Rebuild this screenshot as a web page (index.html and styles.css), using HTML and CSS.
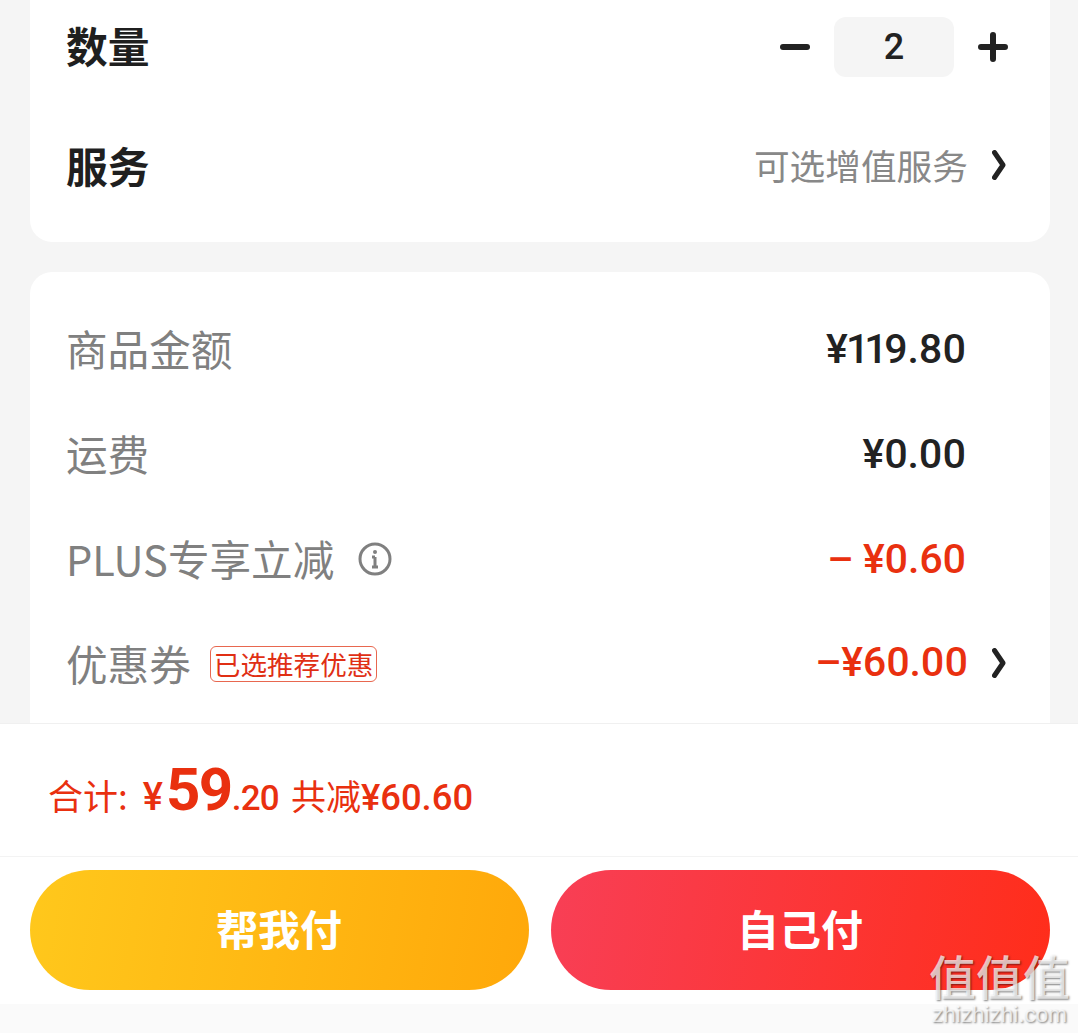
FILE: index.html
```html
<!DOCTYPE html>
<html lang="zh-CN">
<head>
<meta charset="utf-8">
<title>确认订单</title>
<link rel="stylesheet" href="styles.css">
</head>
<body>
<div class="page">
  <main class="scroll">
    <section class="card card-top">
      <div class="row row-qty">
        <span class="title">数量</span>
        <div class="stepper">
          <svg class="step-icon" viewBox="0 0 30 30"><path d="M3 15h24"/></svg>
          <span class="qty">2</span>
          <svg class="step-icon" viewBox="0 0 30 30"><path d="M3 15h24M15 3v24"/></svg>
        </div>
      </div>
      <div class="row row-service">
        <span class="title">服务</span>
        <div class="row-end">
          <span class="hint">可选增值服务</span>
          <svg class="chevron" viewBox="0 0 14 30"><path d="M2.5 2.5 11 15 2.5 27.5"/></svg>
        </div>
      </div>
    </section>
    <section class="card card-price">
      <div class="price-row">
        <span class="label">商品金额</span>
        <span class="amount">¥119.80</span>
      </div>
      <div class="price-row">
        <span class="label">运费</span>
        <span class="amount">¥0.00</span>
      </div>
      <div class="price-row">
        <div class="label-group">
          <span class="label">PLUS专享立减</span>
          <svg class="info" viewBox="0 0 34 34">
            <circle cx="17" cy="17" r="15"/>
            <path d="M17 15v10M14 15h3M14 25h6"/>
            <circle class="info-dot" cx="17" cy="10" r="2"/>
          </svg>
        </div>
        <span class="amount amount-off">– ¥0.60</span>
      </div>
      <div class="price-row price-row-link">
        <div class="label-group">
          <span class="label">优惠券</span>
          <span class="tag">已选推荐优惠</span>
        </div>
        <div class="row-end row-end-tight">
          <span class="amount amount-off">–¥60.00</span>
          <svg class="chevron" viewBox="0 0 14 30"><path d="M2.5 2.5 11 15 2.5 27.5"/></svg>
        </div>
      </div>
    </section>
  </main>
  <footer class="footer">
    <div class="summary">
      <span class="sum-label">合计:</span>
      <span class="sum-yen">¥</span><span class="sum-int">59</span><span class="sum-dec">.20</span>
      <span class="sum-off">共减<span class="sum-off-num">¥60.60</span></span>
    </div>
    <div class="actions">
      <button class="pay pay-friend">帮我付</button>
      <button class="pay pay-self">自己付</button>
    </div>
  </footer>
  <div class="foot-strip"></div>
  <div class="mark">
    <span class="mark-glyph">值值值</span>
    <span class="mark-url">zhizhizhi.com</span>
  </div>
</div>
</body>
</html>
```

FILE: styles.css
```css
* { box-sizing: border-box; }

html, body {
  margin: 0;
  padding: 0;
  background: #f5f5f5;
}

body {
  font-family: "Noto Sans CJK SC", "Noto Sans", sans-serif;
  color: #222;
}

.page {
  position: relative;
  width: 1078px;
  height: 1033px;
  overflow: hidden;
  display: flex;
  flex-direction: column;
}

.scroll {
  height: 723px;
  flex: none;
  overflow: hidden;
  padding: 0 28px 0 30px;
  display: flex;
  flex-direction: column;
  gap: 30px;
}

.card {
  background: #fff;
  flex: none;
}

.card-top {
  height: 242px;
  border-radius: 0 0 22px 22px;
  padding: 0 42px 28px 36px;
  display: flex;
  flex-direction: column;
  gap: 26px;
}

.row {
  height: 94px;
  display: flex;
  align-items: center;
  justify-content: space-between;
}

.title {
  font-size: 41.8px;
  font-weight: 700;
  line-height: 1;
  color: #1f1f1f;
  margin-bottom: 3px;
}

.stepper {
  display: flex;
  align-items: center;
  gap: 24px;
}

.step-icon {
  width: 30px;
  height: 30px;
  fill: none;
  stroke: #222;
  stroke-width: 6;
  stroke-linecap: round;
}

.qty {
  width: 120px;
  height: 60px;
  border-radius: 12px;
  background: #f5f5f5;
  font-family: "Roboto", sans-serif;
  font-size: 36px;
  font-weight: 500;
  display: flex;
  align-items: center;
  justify-content: center;
}

.row-end {
  display: flex;
  align-items: center;
  gap: 24px;
  margin-bottom: 4px;
}

.row-end-tight .chevron {
  margin-bottom: 2px;
}

.hint {
  font-size: 35.7px;
  line-height: 1;
  color: #888;
}

.chevron {
  width: 14px;
  height: 30px;
  margin-right: 2px;
  fill: none;
  stroke: #222;
  stroke-width: 5;
  stroke-linecap: round;
  stroke-linejoin: round;
}

.card-price {
  height: 520px;
  border-radius: 22px 22px 0 0;
  padding: 26px 42px 0 36px;
}

.price-row {
  height: 105px;
  display: flex;
  align-items: center;
  justify-content: space-between;
  padding-right: 42px;
}

.price-row-link {
  padding-right: 0;
}

.label-group {
  display: flex;
  align-items: center;
  gap: 24px;
}

.label {
  font-size: 41.6px;
  line-height: 1;
  color: #808080;
  margin-bottom: 4px;
}

.amount {
  font-family: "Roboto", sans-serif;
  font-feature-settings: "pnum";
  font-size: 41px;
  font-weight: 500;
  letter-spacing: -0.4px;
  line-height: 1;
  color: #222;
  margin-bottom: 2px;
}

.amount-off {
  color: #e9300f;
}

.info {
  width: 34px;
  height: 34px;
  margin-bottom: 3px;
  fill: none;
  stroke: #808080;
  stroke-width: 3;
}

.info-dot {
  fill: #808080;
  stroke: none;
}

.tag {
  margin: 0 0 4px -5px;
  height: 36px;
  padding: 0 3px;
  border: 1px solid #e8674f;
  border-radius: 6px;
  color: #e02f14;
  font-size: 26.6px;
  line-height: 34px;
  white-space: nowrap;
}

.footer {
  height: 281px;
  flex: none;
  background: #fff;
  border-top: 1px solid #f0f0f0;
  display: flex;
  flex-direction: column;
}

.summary {
  height: 132px;
  flex: none;
  padding: 0 0 0 48px;
  display: flex;
  align-items: baseline;
  align-content: center;
  flex-wrap: wrap;
  color: #e9300f;
  font-size: 35px;
  line-height: 1;
  white-space: nowrap;
}

.sum-label {
  margin-right: 15px;
}

.sum-yen {
  font-family: "Roboto", sans-serif;
  font-weight: 500;
  font-size: 38px;
  margin-right: 3px;
}

.sum-int {
  font-family: "Roboto", sans-serif;
  font-weight: 700;
  font-size: 60px;
  letter-spacing: -1.5px;
}

.sum-dec {
  font-family: "Roboto", sans-serif;
  font-size: 35px;
  font-weight: 500;
  letter-spacing: -0.8px;
  margin-right: 12px;
}

.sum-off-num {
  font-family: "Roboto", sans-serif;
  font-size: 36.4px;
  font-weight: 500;
}

.actions {
  border-top: 1px solid #f3f3f3;
  padding: 13px 28px 0 30px;
  display: flex;
  gap: 22px;
}

.pay {
  width: 499px;
  height: 120px;
  border: 0;
  border-radius: 60px;
  color: #fff;
  font-family: inherit;
  font-size: 42px;
  font-weight: 700;
  padding: 0 1px 6px 0;
}

.pay-friend {
  background: linear-gradient(100deg, #ffc81c, #ffa80a);
}

.pay-self {
  background: linear-gradient(100deg, #f83f56, #ff2d1a);
}

.foot-strip {
  flex: 1;
  background: #fafafa;
}

/* Site watermark over the lower right corner */
.mark {
  position: absolute;
  left: 927px;
  top: 950px;
  width: 145px;
  display: flex;
  flex-direction: column;
  align-items: center;
  gap: 3px;
  color: rgba(255, 255, 255, 0.72);
  text-shadow: 1px 1px 2px rgba(0, 0, 0, 0.5);
  white-space: nowrap;
}

.mark-glyph {
  font-size: 47px;
  line-height: 50px;
  font-weight: 500;
}

.mark-url {
  font-family: "Liberation Sans", sans-serif;
  font-size: 22.5px;
  line-height: 24px;
}
```
